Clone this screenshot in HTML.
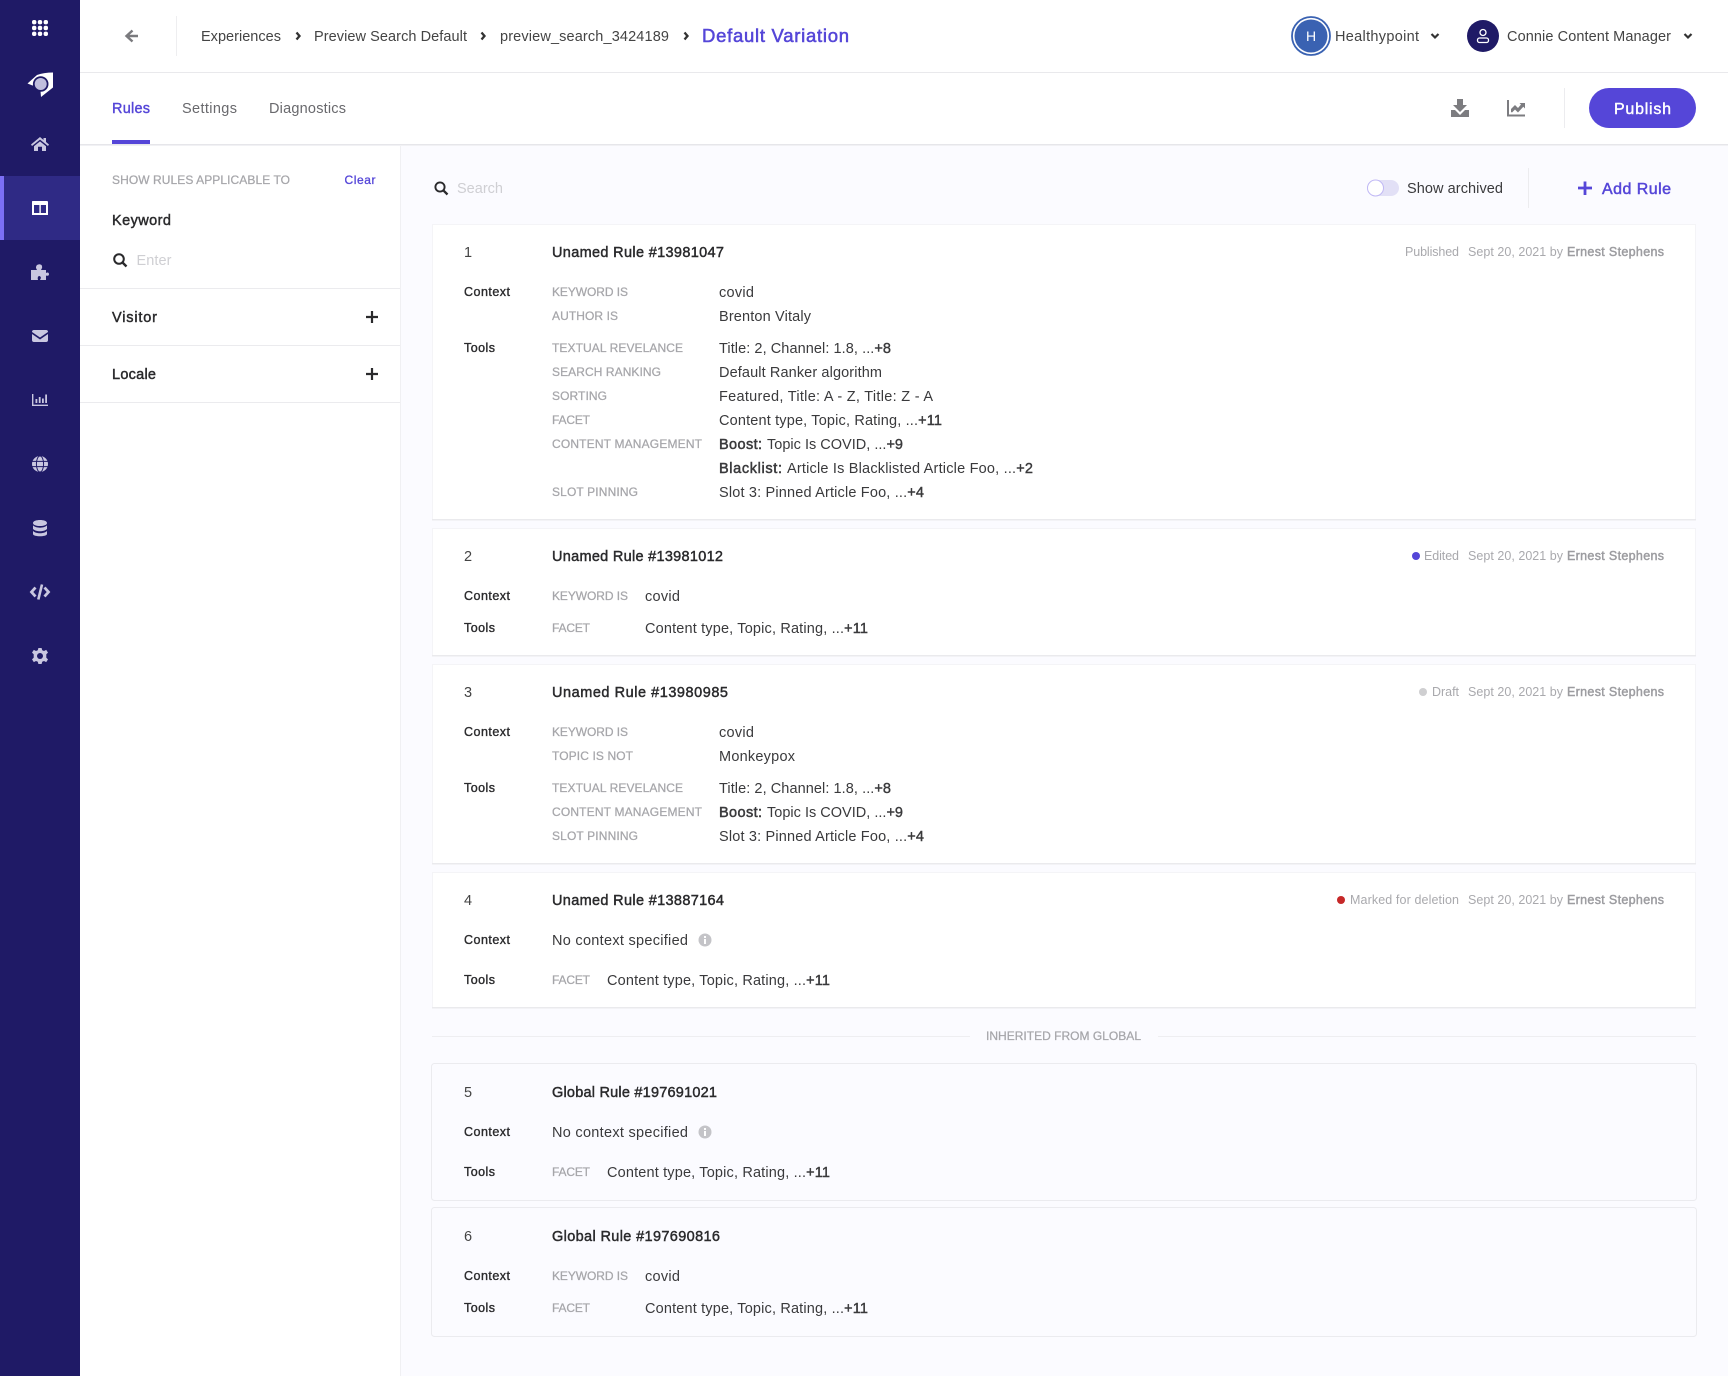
<!DOCTYPE html>
<html lang="en"><head><meta charset="utf-8"><title>Default Variation</title>
<style>
html,body{margin:0;padding:0;background:#fbfbff;width:1728px;height:1376px;overflow:hidden}
svg{display:block;font-family:"Liberation Sans",Arial,sans-serif}
text{fill:currentColor;color:#3a3a3c;font-size:14.5px}
.m{stroke:currentColor;stroke-width:.4px}
.b{stroke:currentColor;stroke-width:.5px}
.t{color:#2a2a2c;stroke:currentColor;stroke-width:.45px;font-size:14.5px}
.n{color:#444;font-size:14.5px}
.h{color:#2a2a2c;font-size:12.5px;stroke:currentColor;stroke-width:.35px}
.l{color:#a6a6aa;font-size:12px;stroke:currentColor;stroke-width:.25px}
.g{color:#a9a9ad;font-size:12.5px}
.e{color:#9c9ca0;font-size:12.5px;stroke:currentColor;stroke-width:.45px}
.p{color:#5546d8}
.ic{fill:#c9c7e0}
</style></head><body>
<svg width="1728" height="1376" viewBox="0 0 1728 1376" xmlns="http://www.w3.org/2000/svg">
<rect width="1728" height="1376" fill="#fbfbff"/>
<!-- left filter panel -->
<rect x="80" y="144" width="320" height="1232" fill="#fff"/>
<rect x="400" y="144" width="1" height="1232" fill="#f0f0f3"/>
<!-- top bars -->
<rect x="80" y="0" width="1648" height="144" fill="#fff"/>
<rect x="80" y="72" width="1648" height="1" fill="#e9e9ec"/>
<rect x="80" y="144" width="1648" height="1" fill="#e6e6ea"/>
<rect x="80" y="145" width="1648" height="1" fill="#f1f1f4"/>
<!-- sidebar -->
<rect width="80" height="1376" fill="#1f1a66"/>
<rect y="176" width="80" height="64" fill="#2f2a85"/>
<rect y="176" width="4" height="64" fill="#7c6ff5"/>
<g fill="#fff"><rect x="32" y="20" width="4.4" height="4.4" rx="2"/><rect x="37.8" y="20" width="4.4" height="4.4" rx="2"/><rect x="43.6" y="20" width="4.4" height="4.4" rx="2"/><rect x="32" y="25.8" width="4.4" height="4.4" rx="2"/><rect x="37.8" y="25.8" width="4.4" height="4.4" rx="2"/><rect x="43.6" y="25.8" width="4.4" height="4.4" rx="2"/><rect x="32" y="31.6" width="4.4" height="4.4" rx="2"/><rect x="37.8" y="31.6" width="4.4" height="4.4" rx="2"/><rect x="43.6" y="31.6" width="4.4" height="4.4" rx="2"/></g>
<path d="M27.5 83.5 L37 75 Q44 72.5 53 72.5 L53 87.5 L41 97 L40.5 91 L40.7 84 L32.5 85.5 Z" fill="#fff"/>
<circle cx="40.7" cy="84" r="7.8" fill="#1f1a66"/>
<circle cx="40.7" cy="84" r="6" fill="#c0bedd"/>
<path class="ic" d="M31 144.5 L40 137 L43.5 140 L43.5 138 L46 138 L46 142 L49 144.5 L48 146 L40 139.6 L32 146 Z M34 146.2 L40 141.4 L46 146.2 L46 151 L42 151 L42 146.8 L38 146.8 L38 151 L34 151 Z"/>
<path d="M32 201.5 Q32 201 33 201 L47 201 Q48 201 48 202 L48 215 L32 215 Z" fill="#fff"/>
<rect x="34" y="205" width="5.4" height="8" fill="#2f2a85"/><rect x="40.8" y="205" width="5.2" height="8" fill="#2f2a85"/>
<path class="ic" d="M31 270 L37 270 Q35 267 37 265 Q39.5 263.5 41.5 265 Q43 267 41 270 L46 270 L46 273 Q48.5 271.5 49 274 Q49 276.5 46 275.5 L46 280 L40 280 Q42 277 39.5 276 Q37 276 38 280 L31 280 Z"/>
<path class="ic" d="M32 332 Q32 330 34 330 L46 330 Q48 330 48 332 L40 337.5 Z M32 334 L40 339.5 L48 334 L48 340 Q48 342 46 342 L34 342 Q32 342 32 340 Z"/>
<path class="ic" d="M32 394 L33.4 394 L33.4 404.6 L48 404.6 L48 406 L32 406 Z M35.5 399 H37.3 V403 H35.5 Z M38.8 397 H40.6 V403 H38.8 Z M42 398.5 H43.8 V403 H42 Z M45.2 394.5 H47 V403 H45.2 Z"/>
<circle cx="40" cy="464" r="8" class="ic"/>
<g stroke="#1f1a66" stroke-width="1" fill="none"><path d="M32 461.4H48M32 466.6H48"/><ellipse cx="40" cy="464" rx="3.6" ry="8"/></g>
<path class="ic" d="M33 523 C33 519 47 519 47 523 C47 527 33 527 33 523 Z M33 525.4 C36 528.5 44 528.5 47 525.4 L47 529 C44 532 36 532 33 529 Z M33 531 C36 534 44 534 47 531 L47 534 C47 537 33 537 33 534 Z"/>
<path d="M35.5 587.5 L31.500 592 L35.5 596.500 M44.5 587.5 L48.500 592 L44.5 596.500" fill="none" stroke="#c9c7e0" stroke-width="2.8"/><path d="M42 584.5 L38.3 599.500" stroke="#c9c7e0" stroke-width="2.6"/>
<path class="ic" d="M38.4 648 H41.6 L42.2 650.2 L44 651 L46.2 649.9 L48 652.6 L46.3 654.3 V657.7 L48 659.4 L46.2 662.1 L44 661 L42.2 661.8 L41.6 664 H38.4 L37.8 661.8 L36 661 L33.8 662.1 L32 659.4 L33.7 657.7 V654.3 L32 652.6 L33.8 649.9 L36 651 L37.8 650.2 Z"/>
<circle cx="40" cy="656" r="3" fill="#1f1a66"/>

<!-- header -->
<path d="M138 36 H127 M132.5 30.5 L126.5 36 L132.5 41.5" fill="none" stroke="#7a7a7e" stroke-width="2.4"/>
<rect x="176" y="16" width="1" height="40" fill="#eeeef0"/>
<text x="201" y="41" textLength="80" style="color:#444">Experiences</text>
<path d="M296.500 32.500 L299.500 36 L296.500 39.500" fill="none" stroke="#333" stroke-width="2.3"/>
<text x="314" y="41" textLength="153" style="color:#444">Preview Search Default</text>
<path d="M481.500 32.500 L484.500 36 L481.500 39.500" fill="none" stroke="#333" stroke-width="2.3"/>
<text x="500" y="41" textLength="169" style="color:#444">preview_search_3424189</text>
<path d="M684.500 32.500 L687.500 36 L684.500 39.500" fill="none" stroke="#333" stroke-width="2.3"/>
<text x="702" y="42" textLength="147" class="p" style="font-size:18.5px;stroke:currentColor;stroke-width:.55px">Default Variation</text>
<circle cx="1311" cy="36" r="19" fill="#fff" stroke="#3a62b2" stroke-width="1.8"/><circle cx="1311" cy="36" r="16.5" fill="#3a62b2"/>
<text x="1311" y="41" text-anchor="middle" style="color:#fff;font-size:14px">H</text>
<text x="1335" y="41" textLength="84" style="color:#444">Healthypoint</text>
<path d="M1431.500 34 L1435 37.500 L1438.500 34" fill="none" stroke="#333" stroke-width="2.2"/>
<circle cx="1483" cy="36" r="16" fill="#1f1a66"/>
<circle cx="1483" cy="32.500" r="3" fill="none" stroke="#fff" stroke-width="1.3"/><rect x="1477.500" y="38" width="11" height="4.500" rx="2" fill="none" stroke="#fff" stroke-width="1.3"/>
<text x="1507" y="41" textLength="164" style="color:#444">Connie Content Manager</text>
<path d="M1684.500 34 L1688 37.500 L1691.500 34" fill="none" stroke="#333" stroke-width="2.2"/>

<!-- tabs -->
<text x="112" y="113" textLength="38" class="p m">Rules</text>
<rect x="112" y="140" width="38" height="4" fill="#5546d8"/>
<text x="182" y="113" textLength="55" style="color:#69696d">Settings</text>
<text x="269" y="113" textLength="77" style="color:#69696d">Diagnostics</text>
<path d="M1457 99 H1463 V105 H1467 L1460 112 L1453 105 H1457 Z M1451 110 H1455 L1460 115 L1465 110 H1469 V117 H1451 Z" fill="#7c7c80"/>
<path d="M1507 100 V116.5 H1525 V114.5 H1509 V100 Z M1511 112 L1511 109 L1515 105 L1518 108 L1521 104.5 L1519.5 103 H1525 V108.5 L1523.3 106.8 L1518 112.5 L1515 109.5 L1512 112.5 Z" fill="#7c7c80"/>
<rect x="1564" y="88" width="1" height="40" fill="#ececef"/>
<rect x="1589" y="88" width="107" height="40" rx="20" fill="#5546d8"/>
<text x="1614" y="114" textLength="57" class="m" style="color:#fff;font-size:16px">Publish</text>

<!-- filter panel -->
<text x="112" y="184" textLength="178" class="l">SHOW RULES APPLICABLE TO</text>
<text x="344.500" y="184" textLength="31" class="p m" style="font-size:12px;stroke-width:.3px">Clear</text>
<text x="112" y="225" textLength="59" class="t">Keyword</text>
<circle cx="119" cy="259" r="4.800" fill="none" stroke="#2a2a2c" stroke-width="2"/><path d="M122.500 262.500 L126.500 266.500" stroke="#2a2a2c" stroke-width="2.400"/>
<text x="136.500" y="265" textLength="35" style="color:#cfcfd3">Enter</text>
<rect x="80" y="288" width="320" height="1" fill="#ebebee"/>
<text x="112" y="322" textLength="45" class="t">Visitor</text>
<path d="M372 311 V323 M366 317 H378" stroke="#2a2a2c" stroke-width="2.200"/>
<rect x="80" y="345" width="320" height="1" fill="#ebebee"/>
<text x="112" y="379" textLength="44" class="t">Locale</text>
<path d="M372 368 V380 M366 374 H378" stroke="#2a2a2c" stroke-width="2.200"/>
<rect x="80" y="402" width="320" height="1" fill="#ebebee"/>

<!-- search row -->
<circle cx="440" cy="187" r="4.600" fill="none" stroke="#2a2a2c" stroke-width="1.900"/><path d="M443.400 190.400 L447.500 194.500" stroke="#2a2a2c" stroke-width="2.300"/>
<text x="457" y="193" textLength="46" style="color:#cfcfd3">Search</text>
<rect x="1367" y="180" width="32" height="16" rx="8" fill="#e2e0f6"/>
<circle cx="1375.500" cy="188" r="8" fill="#fff" stroke="#c0b8f5" stroke-width="1"/>
<text x="1407" y="193" textLength="96" style="color:#3a3a3c">Show archived</text>
<rect x="1528" y="168" width="1" height="40" fill="#ececef"/>
<path d="M1585 181.500 V195 M1578 188 H1592" stroke="#5546d8" stroke-width="2.800"/>
<text x="1602" y="194" textLength="69" class="p" style="font-size:16px;stroke:currentColor;stroke-width:.5px">Add Rule</text>

<!-- card 1 -->
<rect x="432.500" y="224.500" width="1263" height="295" fill="#fff" stroke="#f4f4f7"/><rect x="432" y="519" width="1264" height="1" fill="#eaeaed"/><rect x="432" y="520" width="1264" height="1" fill="#f3f3f6"/>
<text x="464" y="257" class="n">1</text>
<text x="552" y="257" textLength="172" class="t">Unamed Rule #13981047</text>
<text x="1405" y="256" textLength="54" class="g">Published</text>
<text x="1468" y="256" textLength="95" class="g">Sept 20, 2021 by</text>
<text x="1567" y="256" textLength="97" class="e">Ernest Stephens</text>
<text x="464" y="296" textLength="46" class="h">Context</text>
<text x="552" y="296" textLength="76" class="l">KEYWORD IS</text><text x="719" y="297" textLength="35">covid</text>
<text x="552" y="320" textLength="66" class="l">AUTHOR IS</text><text x="719" y="321" textLength="92">Brenton Vitaly</text>
<text x="464" y="352" textLength="31" class="h">Tools</text>
<text x="552" y="352" textLength="131" class="l">TEXTUAL REVELANCE</text><text x="719" y="353" textLength="172">Title: 2, Channel: 1.8, ...<tspan class="m">+8</tspan></text>
<text x="552" y="376" textLength="109" class="l">SEARCH RANKING</text><text x="719" y="377" textLength="163">Default Ranker algorithm</text>
<text x="552" y="400" textLength="55" class="l">SORTING</text><text x="719" y="401" textLength="214">Featured, Title: A - Z, Title: Z - A</text>
<text x="552" y="424" textLength="38" class="l">FACET</text><text x="719" y="425" textLength="223">Content type, Topic, Rating, ...<tspan class="m">+11</tspan></text>
<text x="552" y="448" textLength="150" class="l">CONTENT MANAGEMENT</text><text x="719" y="449" textLength="43" class="b">Boost:</text><text x="767" y="449" textLength="136">Topic Is COVID, ...<tspan class="m">+9</tspan></text>
<text x="719" y="473" textLength="63" class="b">Blacklist:</text><text x="787" y="473" textLength="246">Article Is Blacklisted Article Foo, ...<tspan class="m">+2</tspan></text>
<text x="552" y="496" textLength="86" class="l">SLOT PINNING</text><text x="719" y="497" textLength="205">Slot 3: Pinned Article Foo, ...<tspan class="m">+4</tspan></text>

<!-- card 2 -->
<rect x="432.500" y="528.500" width="1263" height="127" fill="#fff" stroke="#f4f4f7"/><rect x="432" y="655" width="1264" height="1" fill="#eaeaed"/><rect x="432" y="656" width="1264" height="1" fill="#f3f3f6"/>
<text x="464" y="561" class="n">2</text>
<text x="552" y="561" textLength="171" class="t">Unamed Rule #13981012</text>
<circle cx="1416" cy="556" r="4" fill="#5546d8"/>
<text x="1424" y="560" textLength="35" class="g">Edited</text>
<text x="1468" y="560" textLength="95" class="g">Sept 20, 2021 by</text>
<text x="1567" y="560" textLength="97" class="e">Ernest Stephens</text>
<text x="464" y="600" textLength="46" class="h">Context</text>
<text x="552" y="600" textLength="76" class="l">KEYWORD IS</text><text x="645" y="601" textLength="35">covid</text>
<text x="464" y="632" textLength="31" class="h">Tools</text>
<text x="552" y="632" textLength="38" class="l">FACET</text><text x="645" y="633" textLength="223">Content type, Topic, Rating, ...<tspan class="m">+11</tspan></text>

<!-- card 3 -->
<rect x="432.500" y="664.500" width="1263" height="199" fill="#fff" stroke="#f4f4f7"/><rect x="432" y="863" width="1264" height="1" fill="#eaeaed"/><rect x="432" y="864" width="1264" height="1" fill="#f3f3f6"/>
<text x="464" y="697" class="n">3</text>
<text x="552" y="697" textLength="176" class="t">Unamed Rule #13980985</text>
<circle cx="1423" cy="692" r="4" fill="#cfcfd1"/>
<text x="1432" y="696" textLength="27" class="g">Draft</text>
<text x="1468" y="696" textLength="95" class="g">Sept 20, 2021 by</text>
<text x="1567" y="696" textLength="97" class="e">Ernest Stephens</text>
<text x="464" y="736" textLength="46" class="h">Context</text>
<text x="552" y="736" textLength="76" class="l">KEYWORD IS</text><text x="719" y="737" textLength="35">covid</text>
<text x="552" y="760" textLength="81" class="l">TOPIC IS NOT</text><text x="719" y="761" textLength="76">Monkeypox</text>
<text x="464" y="792" textLength="31" class="h">Tools</text>
<text x="552" y="792" textLength="131" class="l">TEXTUAL REVELANCE</text><text x="719" y="793" textLength="172">Title: 2, Channel: 1.8, ...<tspan class="m">+8</tspan></text>
<text x="552" y="816" textLength="150" class="l">CONTENT MANAGEMENT</text><text x="719" y="817" textLength="43" class="b">Boost:</text><text x="767" y="817" textLength="136">Topic Is COVID, ...<tspan class="m">+9</tspan></text>
<text x="552" y="840" textLength="86" class="l">SLOT PINNING</text><text x="719" y="841" textLength="205">Slot 3: Pinned Article Foo, ...<tspan class="m">+4</tspan></text>

<!-- card 4 -->
<rect x="432.500" y="872.500" width="1263" height="135" fill="#fff" stroke="#f4f4f7"/><rect x="432" y="1007" width="1264" height="1" fill="#eaeaed"/><rect x="432" y="1008" width="1264" height="1" fill="#f3f3f6"/>
<text x="464" y="905" class="n">4</text>
<text x="552" y="905" textLength="172" class="t">Unamed Rule #13887164</text>
<circle cx="1341" cy="900" r="4" fill="#c62828"/>
<text x="1350" y="904" textLength="109" class="g">Marked for deletion</text>
<text x="1468" y="904" textLength="95" class="g">Sept 20, 2021 by</text>
<text x="1567" y="904" textLength="97" class="e">Ernest Stephens</text>
<text x="464" y="944" textLength="46" class="h">Context</text>
<text x="552" y="945" textLength="136">No context specified</text>
<circle cx="705" cy="940" r="6.500" fill="#c4c4c8"/><rect x="704" y="939" width="2" height="5" fill="#fff"/><rect x="704" y="936" width="2" height="2" fill="#fff"/>
<text x="464" y="984" textLength="31" class="h">Tools</text>
<text x="552" y="984" textLength="38" class="l">FACET</text><text x="607" y="985" textLength="223">Content type, Topic, Rating, ...<tspan class="m">+11</tspan></text>

<!-- divider -->
<rect x="432" y="1036" width="538" height="1" fill="#eeeef1"/>
<text x="986" y="1040" textLength="155" class="l">INHERITED FROM GLOBAL</text>
<rect x="1158" y="1036" width="538" height="1" fill="#eeeef1"/>

<!-- card 5 -->
<rect x="431.500" y="1063.500" width="1265" height="137" rx="3" fill="#fbfbff" stroke="#ebebef"/>
<text x="464" y="1097" class="n">5</text>
<text x="552" y="1097" textLength="165" class="t">Global Rule #197691021</text>
<text x="464" y="1136" textLength="46" class="h">Context</text>
<text x="552" y="1137" textLength="136">No context specified</text>
<circle cx="705" cy="1132" r="6.500" fill="#c4c4c8"/><rect x="704" y="1131" width="2" height="5" fill="#fff"/><rect x="704" y="1128" width="2" height="2" fill="#fff"/>
<text x="464" y="1176" textLength="31" class="h">Tools</text>
<text x="552" y="1176" textLength="38" class="l">FACET</text><text x="607" y="1177" textLength="223">Content type, Topic, Rating, ...<tspan class="m">+11</tspan></text>

<!-- card 6 -->
<rect x="431.500" y="1207.500" width="1265" height="129" rx="3" fill="#fbfbff" stroke="#ebebef"/>
<text x="464" y="1241" class="n">6</text>
<text x="552" y="1241" textLength="168" class="t">Global Rule #197690816</text>
<text x="464" y="1280" textLength="46" class="h">Context</text>
<text x="552" y="1280" textLength="76" class="l">KEYWORD IS</text><text x="645" y="1281" textLength="35">covid</text>
<text x="464" y="1312" textLength="31" class="h">Tools</text>
<text x="552" y="1312" textLength="38" class="l">FACET</text><text x="645" y="1313" textLength="223">Content type, Topic, Rating, ...<tspan class="m">+11</tspan></text>
</svg>
</body></html>
